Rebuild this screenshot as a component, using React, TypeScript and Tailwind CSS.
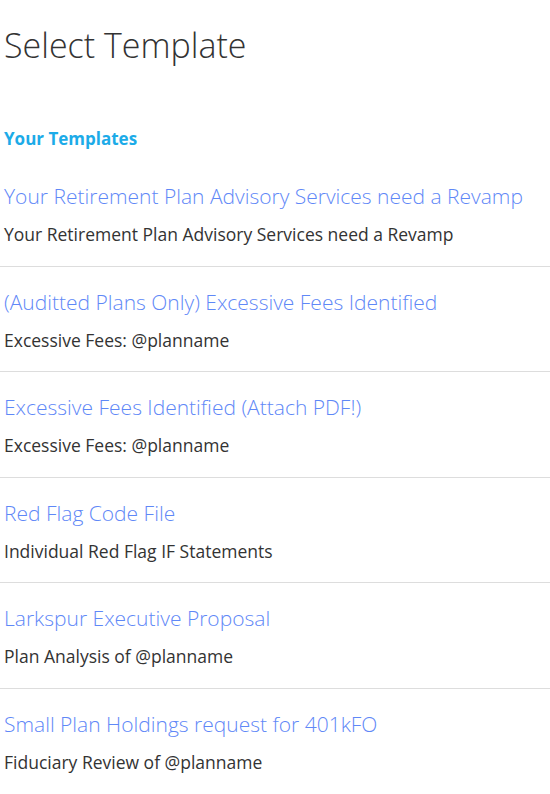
const TEMPLATES = [
  {
    title: "Your Retirement Plan Advisory Services need a Revamp",
    subject: "Your Retirement Plan Advisory Services need a Revamp",
  },
  {
    title: "(Auditted Plans Only) Excessive Fees Identified",
    subject: "Excessive Fees: @planname",
  },
  {
    title: "Excessive Fees Identified (Attach PDF!)",
    subject: "Excessive Fees: @planname",
  },
  { title: "Red Flag Code File", subject: "Individual Red Flag IF Statements" },
  { title: "Larkspur Executive Proposal", subject: "Plan Analysis of @planname" },
  {
    title: "Small Plan Holdings request for 401kFO",
    subject: "Fiduciary Review of @planname",
  },
];

export default function App() {
  return (
    <div className="min-h-screen bg-white font-['Open_Sans',sans-serif] text-[#333]">
      <h1 className="pl-[4px] pt-[21px] text-[34px] font-light leading-[48px] text-[#333]">
        Select Template
      </h1>
      <h2 className="mt-[58px] pl-[4px] text-[17px] font-bold leading-[24px] text-[#1cabe8]">
        Your Templates
      </h2>
      <ul className="mt-[10px]">
        {TEMPLATES.map((t) => (
          <li
            key={t.title}
            className="cursor-pointer border-b border-[#dddddd] pt-[20px] pb-[19.6px] pl-[4px]"
          >
            <div className="text-[21px] font-light leading-[30px] text-[#5f88f7]">
              {t.title}
            </div>
            <div className="mt-[11px] text-[17.5px] leading-[24px] text-[#333]">
              {t.subject}
            </div>
          </li>
        ))}
      </ul>
    </div>
  );
}
